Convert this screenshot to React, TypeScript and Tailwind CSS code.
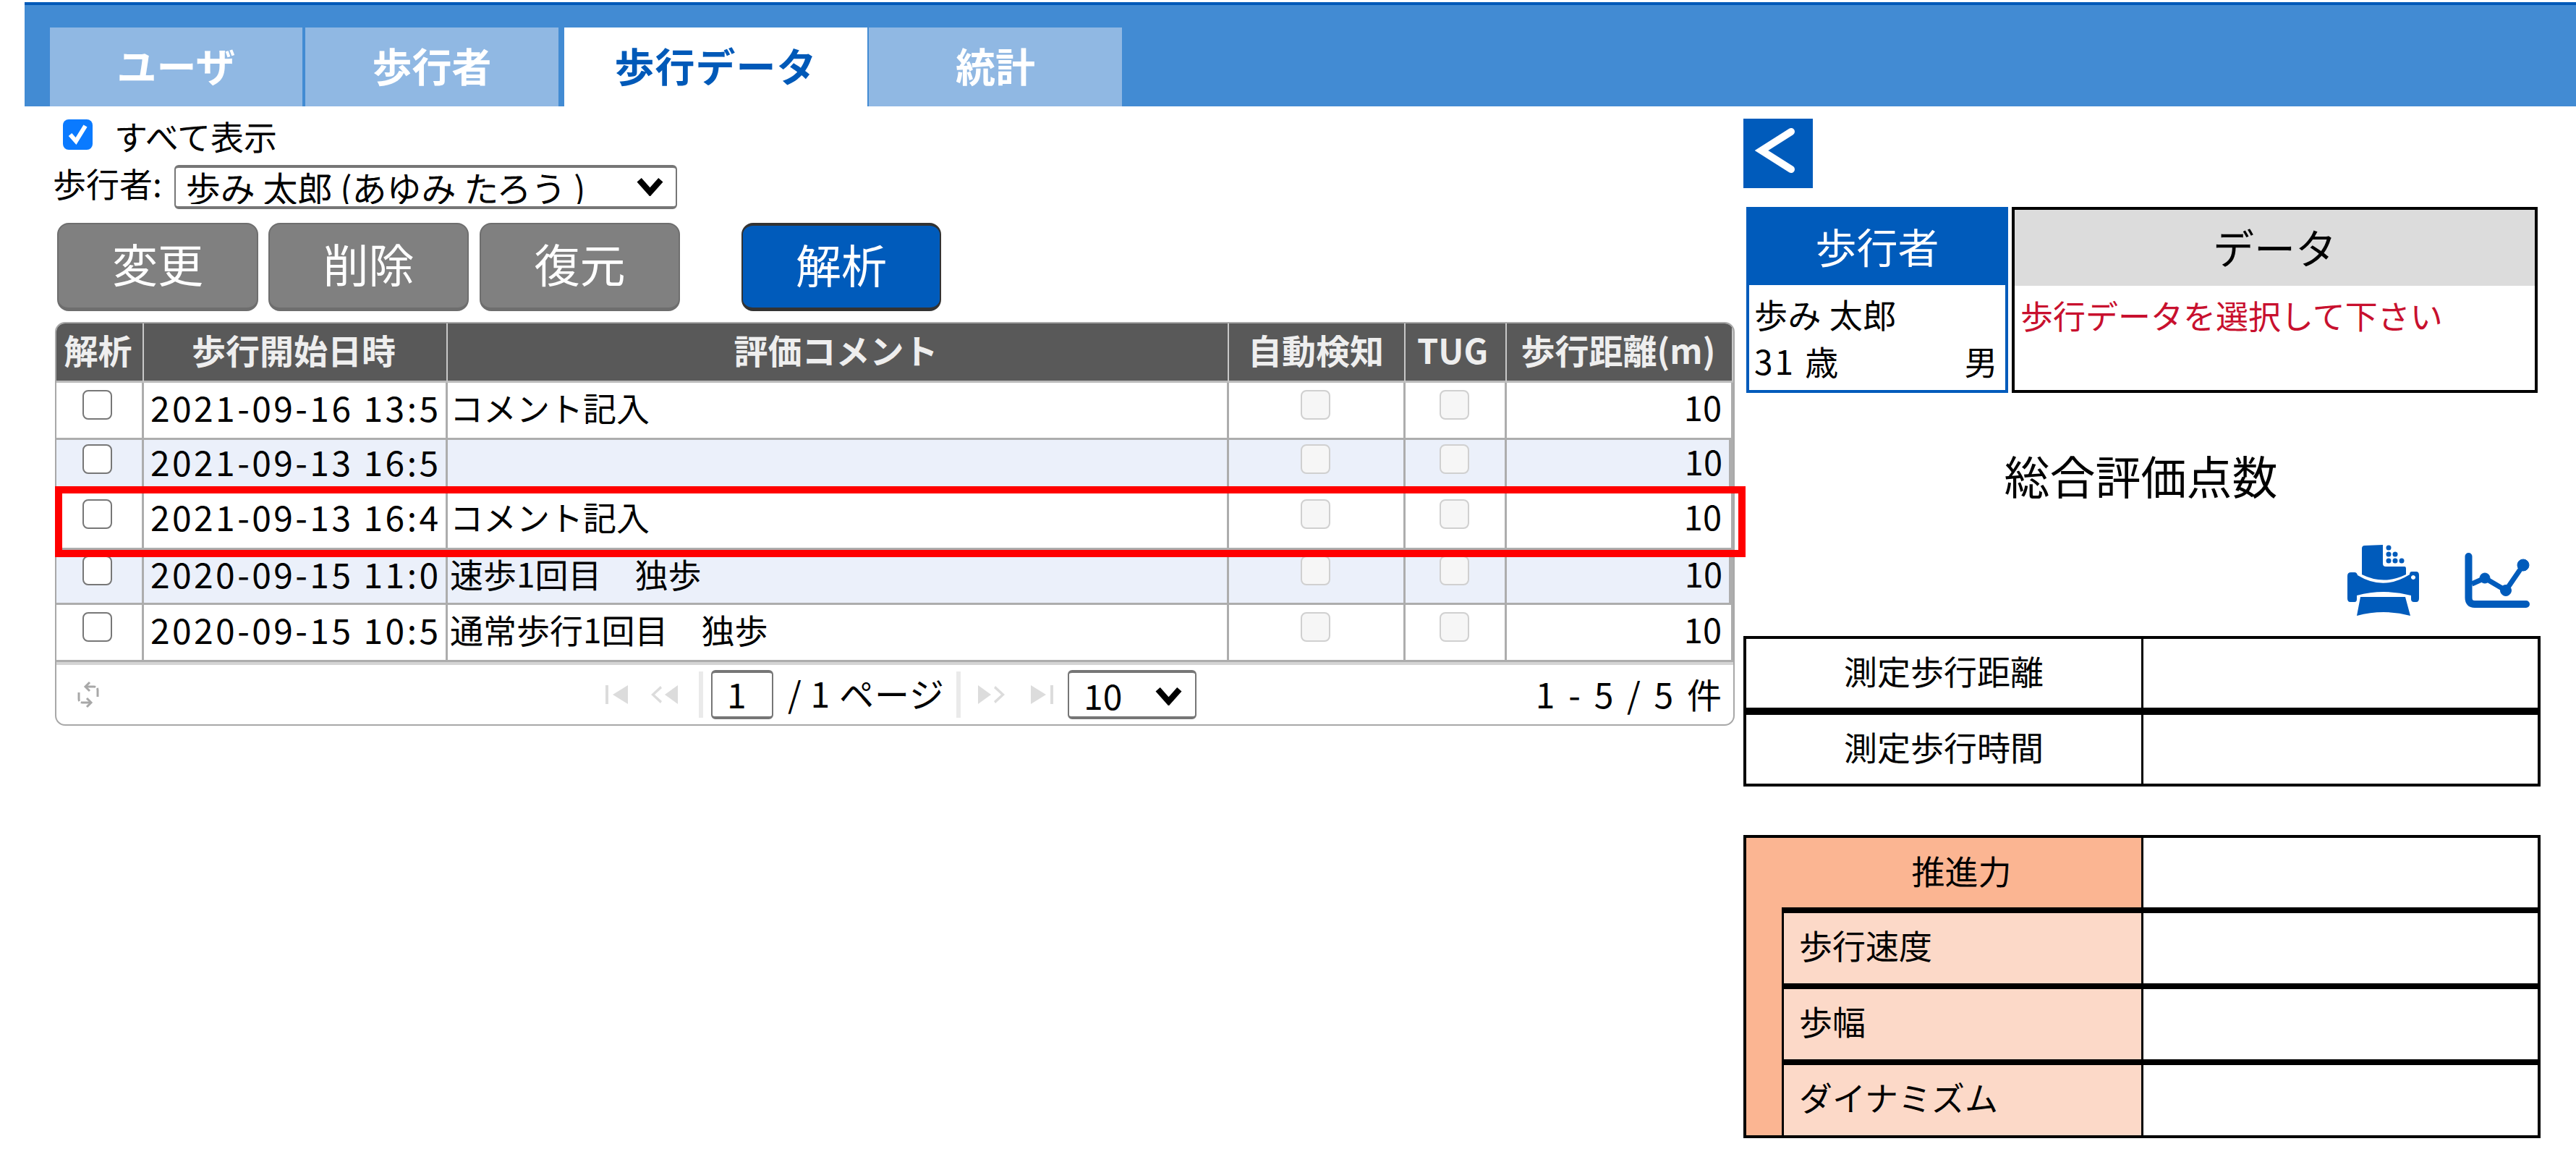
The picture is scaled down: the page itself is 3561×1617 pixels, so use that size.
import React from "react";

const rows = [
  { date: "2021-09-16 13:5", comment: "コメント記入", h: "h-[79px]", alt: false },
  { date: "2021-09-13 16:5", comment: "", h: "h-[71px]", alt: true },
  { date: "2021-09-13 16:4", comment: "コメント記入", h: "h-[81px]", alt: false },
  { date: "2020-09-15 11:0", comment: "速歩1回目　独歩", h: "h-[76px]", alt: true },
  { date: "2020-09-15 10:5", comment: "通常歩行1回目　独歩", h: "h-[79px]", alt: false },
];

function Chevron({ className }: { className: string }) {
  return (
    <svg viewBox="0 0 40 28" className={className} fill="none" stroke="#000" strokeWidth="9">
      <path d="M4 4 L20 22 L36 4" />
    </svg>
  );
}

function PrinterIcon() {
  return (
    <svg viewBox="0 0 99 98" className="w-[99px] h-[98px]" fill="#005bbb">
      <path d="M20 5 Q20 1 24 1 L49 0 L49 26 Q49 30 53 30 L79 30 Q81 30 81 33 L81 41 Q50 56 20 41 Z" />
      <circle cx="57" cy="4" r="3.5" />
      <circle cx="57" cy="13" r="3.5" />
      <circle cx="66" cy="13" r="3.5" />
      <circle cx="57" cy="22" r="3.5" />
      <circle cx="66" cy="22" r="3.5" />
      <circle cx="75" cy="22" r="3.5" />
      <path
        fillRule="evenodd"
        d="M5 38 Q0 38 0 43 L0 74 Q0 79 4 79 L10 79 Q13 79 13 75 L13 70 Q50 60 88 70 L88 75 Q88 79 92 79 L95 79 Q99 79 99 74 L99 42 Q99 37 95 37 L89 37 Q86 37 86 41 Q50 64 14 42 Q13 38 10 38 Z M91 42 a3 3 0 1 0 0.01 0 Z"
      />
      <path d="M18 72 L80 72 L87 98 Q50 88 13 98 Z" />
    </svg>
  );
}

function ChartIcon() {
  return (
    <svg viewBox="0 0 90 76" className="w-[90px] h-[76px]" fill="#005bbb" stroke="#005bbb">
      <path d="M5.5 5 V62 Q5.5 71 14 71 H85" fill="none" strokeWidth="10" strokeLinecap="round" />
      <path d="M10 43 L28 35 L57 52 L81 17" fill="none" strokeWidth="7" />
      <circle cx="28" cy="35" r="7" strokeWidth="1" />
      <circle cx="57" cy="52" r="7.5" strokeWidth="1" />
      <circle cx="81" cy="17" r="8" strokeWidth="1" />
    </svg>
  );
}

function RefreshIcon() {
  return (
    <svg viewBox="0 0 34 38" className="w-[34px] h-[38px]" fill="none" stroke="#a8a8a8" strokeWidth="3">
      <path d="M14 8 H25 Q30 8 30 13 V22" strokeDasharray="13 3" />
      <path d="M19 2 L13 8 L19 14" />
      <path d="M20 30 H9 Q4 30 4 25 V16" strokeDasharray="13 3" />
      <path d="M15 24 L21 30 L15 36" />
    </svg>
  );
}

function PagerIcon({ kind }: { kind: "first" | "prev" | "next" | "last" }) {
  const flip = kind === "next" || kind === "last";
  const wide = kind === "prev" || kind === "next";
  return (
    <svg
      viewBox={wide ? "0 0 40 30" : "0 0 32 30"}
      className={`${wide ? "w-[40px]" : "w-[32px]"} h-[30px] ${flip ? "-scale-x-100" : ""}`}
      fill="#dcdcdc"
    >
      {wide ? (
        <>
          <path d="M14 3 L1 15 L14 27 L16 24 L6 15 L16 6 Z" />
          <path d="M38 2 L20 15 L38 28 Z" />
        </>
      ) : (
        <>
          <rect x="0" y="2" width="4" height="26" />
          <path d="M31 2 L10 15 L31 28 Z" />
        </>
      )}
    </svg>
  );
}

function Box({ disabled }: { disabled?: boolean }) {
  return (
    <input
      type="checkbox"
      disabled={disabled}
      className={`appearance-none block mx-auto w-[41px] h-[41px] rounded-[8px] border-2 ${
        disabled ? "bg-[#f6f6f6] border-[#d0d0d0]" : "bg-white border-[#777777]"
      }`}
    />
  );
}

const th = "border-r-2 border-[#c8c8c8] font-bold text-[#eeeeee] text-center pl-0 pb-[6px] whitespace-nowrap";
const td = "border-r-[3px] border-b-[3px] border-[#adadad] p-0 whitespace-nowrap leading-[50px]";

export default function App() {
  return (
    <div className="min-h-[1617px] bg-white text-black text-[46px] font-['Noto_Sans_CJK_JP',sans-serif]">
      <div className="h-[3px] bg-white" />
      <header className="ml-[34px] h-[144px] bg-[#428bd3] border-t-[4px] border-[#0059b8] flex items-end pl-[35px] gap-[4px] text-[55px] font-bold text-white">
        <div className="w-[349px] h-[109px] bg-[#90b8e3] flex items-center justify-center pb-[6px]">ユーザ</div>
        <div className="w-[350px] h-[109px] bg-[#90b8e3] flex items-center justify-center pb-[6px]">歩行者</div>
        <div className="w-[419px] ml-[4px] h-[109px] bg-white text-[#0059b8] tracking-[1px] flex items-center justify-center pb-[6px]">歩行データ</div>
        <div className="w-[350px] -ml-[2px] h-[109px] bg-[#90b8e3] flex items-center justify-center pb-[6px]">統計</div>
      </header>

      <main className="flex">
        <section className="w-[2410px] shrink-0 pl-[76px]">
          <div className="relative mt-[17px] ml-[11px] h-[44px] flex items-center gap-[30px]">
            <input type="checkbox" defaultChecked className="appearance-none block w-[41px] h-[42px] rounded-[8px] bg-[#0a7aff]" />
            <svg viewBox="0 0 41 42" className="absolute left-0 top-0 w-[41px] h-[42px]" fill="none" stroke="#fff" strokeWidth="6">
              <path d="M10 22 L18 31 L31 10" />
            </svg>
            <span className="leading-none pt-[2px]">すべて表示</span>
          </div>

          <div className="mt-[17px] -ml-[3px] flex items-center gap-[17px] h-[61px]">
            <span className="pb-[6px]">歩行者:</span>
            <div className="relative w-[695px] h-[61px]">
              <select className="appearance-none w-full h-full bg-white border-2 border-t-[4px] border-b-[4px] border-[#767676] rounded-[6px] pl-[14px] text-[48px] leading-none">
                <option>歩み 太郎 (あゆみ たろう )</option>
              </select>
              <Chevron className="absolute right-[17px] top-[20px] w-[41px] h-[26px]" />
            </div>
          </div>

          <div className="mt-[22px] ml-[3px] flex text-[63px] text-white">
            <button className="w-[278px] h-[122px] pb-[8px] rounded-[16px] bg-[#808080] border-2 border-b-[5px] border-[#6e6e6e]">変更</button>
            <button className="ml-[14px] w-[277px] h-[122px] pb-[8px] rounded-[16px] bg-[#808080] border-2 border-b-[5px] border-[#6e6e6e]">削除</button>
            <button className="ml-[15px] w-[277px] h-[122px] pb-[8px] rounded-[16px] bg-[#808080] border-2 border-b-[5px] border-[#6e6e6e]">復元</button>
            <button className="ml-[85px] w-[276px] h-[122px] pb-[8px] rounded-[16px] bg-[#005bbb] border-2 border-t-[4px] border-b-[5px] border-[#333333]">解析</button>
          </div>

          <div className="relative mt-[15px] w-[2322px]">
            <div className="border-[2px] border-[#a8a8a8] rounded-[14px] overflow-hidden">
              <table className="table-fixed w-[2318px] border-separate border-spacing-0 text-[47px]">
                <thead>
                  <tr className="h-[82px] bg-[#595959]">
                    <th className={`${th} w-[121px] pr-[4px] border-b-[3px] border-b-[#bbbbbb]`}>解析</th>
                    <th className={`${th} w-[420px] pr-[4px] border-b-[3px] border-b-[#bbbbbb]`}>歩行開始日時</th>
                    <th className={`${th} w-[1080px] pr-[5px] border-b-[3px] border-b-[#bbbbbb]`}>評価コメント</th>
                    <th className={`${th} w-[244px] pr-[2px] border-b-[3px] border-b-[#bbbbbb]`}>自動検知</th>
                    <th className={`${th} w-[140px] pr-[8px] border-b-[3px] border-b-[#bbbbbb]`}>TUG</th>
                    <th className={`${th} border-r-0 pr-[3px] border-b-[3px] border-b-[#bbbbbb]`}>歩行距離(m)</th>
                  </tr>
                </thead>
                <tbody>
                  {rows.map((r) => (
                    <tr key={r.date} className={`${r.h} ${r.alt ? "bg-[#ebf0fa]" : "bg-white"}`}>
                      <td className={`${td} pb-[16px] pr-[5px]`}><Box /></td>
                      <td className={`${td} pb-[10px] pl-[9px] text-[48px] tracking-[3.4px]`}>{r.date}</td>
                      <td className={`${td} pb-[10px] pl-[3px] text-[46px]`}>{r.comment}</td>
                      <td className={`${td} pb-[16px] pr-[3px]`}><Box disabled /></td>
                      <td className={`${td} pb-[16px] pr-[3px]`}><Box disabled /></td>
                      <td className={`${td} ${r.alt ? "border-r-[6px] pr-[9px]" : "border-r-[2px] pr-[13px]"} pb-[10px] text-right`}>10</td>
                    </tr>
                  ))}
                </tbody>
              </table>
              <div className="h-[86px] border-t-[4px] border-[#d4d4d4] flex items-center">
                <div className="ml-[27px] w-[34px]"><RefreshIcon /></div>
                <div className="ml-[698px] flex items-center">
                  <PagerIcon kind="first" />
                  <div className="ml-[30px]"><PagerIcon kind="prev" /></div>
                  <div className="ml-[27px] w-[6px] h-[64px] bg-[#eaeaea]" />
                  <input
                    readOnly
                    value="1"
                    className="ml-[11px] w-[86px] h-[68px] bg-white border-2 border-t-[4px] border-b-[4px] border-[#767676] rounded-[6px] pl-[20px] pb-[4px] text-[48px] leading-none"
                  />
                  <span className="ml-[20px] w-[226px] pb-[6px] text-[48px] tracking-[1px] whitespace-nowrap">/ 1 ページ</span>
                  <div className="ml-[7px] w-[6px] h-[64px] bg-[#eaeaea]" />
                  <div className="ml-[22px]"><PagerIcon kind="next" /></div>
                  <div className="ml-[34px]"><PagerIcon kind="last" /></div>
                  <div className="relative ml-[20px] w-[178px] h-[68px]">
                    <select className="appearance-none w-full h-full bg-white border-2 border-t-[4px] border-b-[4px] border-[#767676] rounded-[6px] pl-[20px] text-[48px] leading-none">
                      <option>10</option>
                    </select>
                    <Chevron className="absolute right-[18px] top-[23px] w-[41px] h-[26px]" />
                  </div>
                </div>
                <span className="ml-auto mr-[12px] pb-[4px] text-[48px] tracking-[4px] whitespace-nowrap">1 - 5 / 5 件</span>
              </div>
            </div>
            <div className="absolute left-0 top-[227px] w-[2337px] h-[98px] border-[10px] border-[#ff0000]" />
          </div>
        </section>

        <aside className="w-[1102px] shrink-0">
          <button className="block mt-[17px] w-[96px] h-[96px] bg-[#005bbb]">
            <svg viewBox="0 0 96 96" className="w-[96px] h-[96px]" fill="none" stroke="#fff" strokeWidth="10" strokeLinecap="round">
              <path d="M66 18 L25 44 L66 70" />
            </svg>
          </button>

          <div className="mt-[26px] ml-[4px] flex gap-[5px] h-[257px]">
            <div className="w-[362px] border-[4px] border-[#005bbb] flex flex-col">
              <div className="h-[105px] -m-[1px] bg-[#005bbb] text-white text-[57px] flex items-center justify-center pb-[4px]">歩行者</div>
              <div className="pt-[8px] pl-[7px] pr-[10px] leading-[65px] tracking-[0.5px]">
                <div>歩み 太郎</div>
                <div className="flex justify-between"><span className="tracking-[3px]">31 歳</span><span>男</span></div>
              </div>
            </div>
            <div className="w-[727px] border-[4px] border-black flex flex-col">
              <div className="h-[105px] bg-[#dcdcdc] text-[57px] flex items-center justify-center pb-[4px]">データ</div>
              <div className="pt-[8px] pl-[8px] text-[45px] leading-[65px] text-[#c8102e]">歩行データを選択して下さい</div>
            </div>
          </div>

          <h2 className="mt-[68px] h-[90px] pr-[3px] text-center text-[63px] leading-[90px]">総合評価点数</h2>

          <div className="mt-[52px] pr-[15px] flex justify-end items-center gap-[63px]">
            <PrinterIcon />
            <ChartIcon />
          </div>

          <div className="mt-[28px] border-[4px] border-black">
            <div className="flex h-[95px]">
              <div className="w-[549px] border-r-[3px] border-black flex items-center justify-center pb-[8px]">測定歩行距離</div>
            </div>
            <div className="flex h-[105px] border-t-[10px] border-black">
              <div className="w-[549px] border-r-[3px] border-black flex items-center justify-center pb-[8px]">測定歩行時間</div>
            </div>
          </div>

          <div className="mt-[67px] border-[4px] border-black">
            <div className="flex h-[96px]">
              <div className="w-[549px] pl-[49px] border-r-[3px] border-black bg-[#fbb592] flex items-center justify-center pb-[7px]">推進力</div>
            </div>
            <div className="flex">
              <div className="w-[49px] bg-[#fbb592]" />
              <div className="flex-1">
                {["歩行速度", "歩幅", "ダイナミズム"].map((label) => (
                  <div key={label} className="flex h-[105px] border-t-[8px] border-black">
                    <div className="w-[500px] border-l-[3px] border-r-[3px] border-black bg-[#fcd9c8] pl-[21px] pb-[10px] flex items-center">{label}</div>
                  </div>
                ))}
              </div>
            </div>
          </div>
        </aside>
      </main>
    </div>
  );
}
